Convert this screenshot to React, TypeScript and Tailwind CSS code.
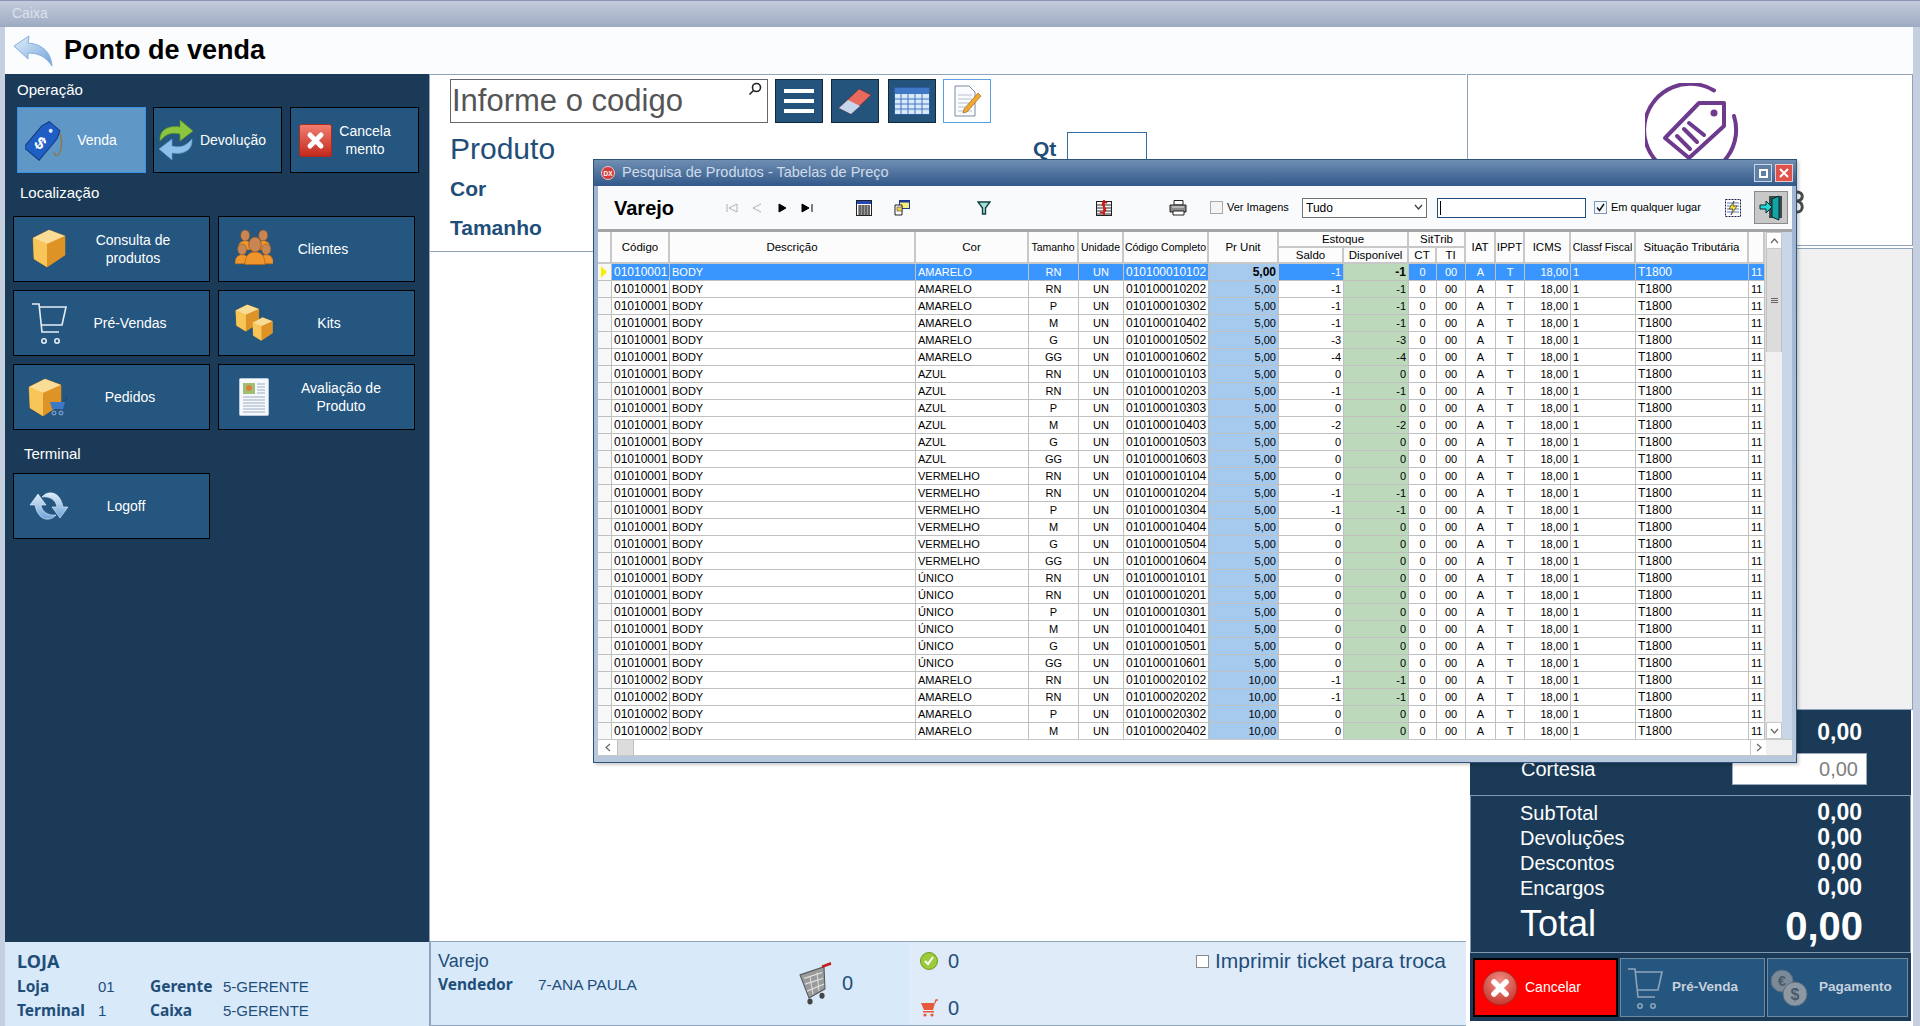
import React from "react";

const navy = "text-[#1f4e79]";
const noto = "[font-family:'Noto_Sans',sans-serif]";

function BackArrow() {
  return (
    <svg width="40" height="32" viewBox="0 0 40 32">
      <defs>
        <linearGradient id="ba" x1="0" y1="0" x2="1" y2="1">
          <stop offset="0" stopColor="#e4f0fb" />
          <stop offset="1" stopColor="#6fa3d8" />
        </linearGradient>
      </defs>
      <path d="M1 11 L16 1 L15 8 C29 9 38 17 39 31 C33 22 26 18 15 18 L15 24 Z" fill="url(#ba)" stroke="#86aedb" strokeWidth="1" />
    </svg>
  );
}
function TagIcon() {
  return (
    <svg width="40" height="44" viewBox="0 0 40 44">
      <path d="M26 9 C34 8 38 20 36 30 C35 38 30 40 29 34" fill="none" stroke="#8a7a55" strokeWidth="1.6" />
      <g transform="rotate(40 18 22)">
        <path d="M11 4 L25 4 L28 12 L28 40 L8 40 L8 12 Z" fill="#1f5fc4" stroke="#123a80" />
        <circle cx="18" cy="10" r="2" fill="#dfeaf8" />
        <text x="18" y="32" fontSize="17" fontWeight="700" fill="#ffffff" textAnchor="middle" fontFamily="Liberation Sans">$</text>
      </g>
    </svg>
  );
}
function SyncIcon() {
  return (
    <svg width="36" height="42" viewBox="0 0 36 42">
      <path d="M2 22 C1 11 10 6 22 8 L22 1 L35 12 L22 22 L22 15 C13 13 8 15 2 22 Z" fill="#8cc63f" stroke="#5c9423" strokeWidth="0.7" />
      <path d="M34 20 C35 31 26 36 14 34 L14 41 L1 30 L14 20 L14 27 C23 29 28 27 34 20 Z" fill="#8fc0ea" stroke="#5f97cc" strokeWidth="0.7" />
    </svg>
  );
}
function RedX() {
  return (
    <svg width="33" height="33" viewBox="0 0 33 33">
      <defs>
        <linearGradient id="rx" x1="0" y1="0" x2="0" y2="1">
          <stop offset="0" stopColor="#f08070" />
          <stop offset="1" stopColor="#c4281c" />
        </linearGradient>
      </defs>
      <rect x="0.5" y="0.5" width="32" height="32" rx="2" fill="url(#rx)" stroke="#a82a20" />
      <path d="M11 11 L22 22 M22 11 L11 22" stroke="#fff" strokeWidth="5" strokeLinecap="round" />
    </svg>
  );
}
function BoxShape() {
  return (
    <>
      <path d="M1 9 L17 1 L33 7 L33 26 L15 38 L2 30 Z" fill="#f2b546" stroke="#c98a20" strokeWidth="0.6" />
      <path d="M1 9 L15 15 L33 7 L17 1 Z" fill="#f9dc96" />
      <path d="M15 15 L33 7 L33 26 L15 38 Z" fill="#dd9326" />
      <path d="M1 9 L15 15 L15 38 L2 30 Z" fill="#f7c558" />
    </>
  );
}
function BoxIcon() {
  return (
    <svg width="34" height="40" viewBox="0 0 34 40">
      <BoxShape />
    </svg>
  );
}
function BoxCartIcon() {
  return (
    <svg width="42" height="38" viewBox="0 0 42 38">
      <BoxShape />
      <path d="M22 24 L37 24 L35 31 L24 31 Z" fill="#3f78c4" />
      <path d="M37 24 L39 18" stroke="#1a4a85" strokeWidth="1.5" />
      <circle cx="26" cy="35" r="2" fill="#2c5d9c" stroke="#cfe0f2" strokeWidth="0.6" />
      <circle cx="33" cy="35" r="2" fill="#2c5d9c" stroke="#cfe0f2" strokeWidth="0.6" />
    </svg>
  );
}
function BoxesIcon() {
  return (
    <svg width="38" height="38" viewBox="0 0 38 38">
      <g transform="scale(0.72)"><BoxShape /></g>
      <g transform="translate(17 13) scale(0.62)"><BoxShape /></g>
    </svg>
  );
}
function PeopleIcon() {
  const P = ({ x, y, s }: { x: number; y: number; s: number }) => (
    <g transform={`translate(${x} ${y}) scale(${s})`}>
      <ellipse cx="8" cy="6" rx="5" ry="6" fill="#c98552" stroke="#8a5528" strokeWidth="0.6" />
      <path d="M0 22 C0 14 4 12 8 12 C12 12 16 14 16 22 Z" fill="#f0942c" stroke="#b06a18" strokeWidth="0.6" />
    </g>
  );
  return (
    <svg width="38" height="40" viewBox="0 0 38 40">
      <P x={3} y={1} s={0.9} />
      <P x={21} y={1} s={0.9} />
      <P x={0} y={15} s={0.9} />
      <P x={24} y={15} s={0.9} />
      <P x={10} y={8} s={1.25} />
    </svg>
  );
}
function CartOutline({ color = "#e6eef5" }: { color?: string }) {
  return (
    <svg width="36" height="44" viewBox="0 0 36 44" fill="none" stroke={color} strokeWidth="1.6">
      <path d="M1 3 L8 3 L11 31 L28 31" />
      <path d="M8 6 L35 6 L31 24 L10 24" />
      <circle cx="13" cy="40" r="2.2" />
      <circle cx="26" cy="40" r="2.2" />
    </svg>
  );
}
function DocIcon() {
  return (
    <svg width="30" height="38" viewBox="0 0 30 38">
      <rect x="0.5" y="0.5" width="29" height="37" rx="1" fill="#f6f8fb" stroke="#b7c6d9" />
      <rect x="4" y="5" width="12" height="11" fill="#9fbf72" />
      <circle cx="10" cy="10" r="3" fill="#d9813a" />
      {[6, 9, 12, 15].map((y) => (
        <path key={y} d={`M18 ${y} H26`} stroke="#9caec4" />
      ))}
      {[19, 22, 25, 28, 31, 34].map((y) => (
        <path key={y} d={`M4 ${y} H26`} stroke="#9caec4" />
      ))}
    </svg>
  );
}
function RefreshIcon() {
  return (
    <svg width="40" height="32" viewBox="0 0 40 32">
      <defs>
        <linearGradient id="rf" x1="0" y1="0" x2="0" y2="1">
          <stop offset="0" stopColor="#dcecf9" />
          <stop offset="1" stopColor="#6ea4d8" />
        </linearGradient>
      </defs>
      <path d="M1 15 L9 4 L17 15 L12 15 C13 22 19 26 27 25 C21 32 9 31 6 15 Z" fill="url(#rf)" stroke="#eaf3fb" strokeWidth="0.6" />
      <path d="M39 17 L31 28 L23 17 L28 17 C27 10 21 6 13 7 C19 0 31 1 34 17 Z" fill="url(#rf)" stroke="#eaf3fb" strokeWidth="0.6" />
    </svg>
  );
}
function HamburgerIcon() {
  return (
    <svg width="30" height="24" viewBox="0 0 30 24" fill="#fff">
      <rect x="0" y="0" width="30" height="4" />
      <rect x="0" y="10" width="30" height="4" />
      <rect x="0" y="20" width="30" height="4" />
    </svg>
  );
}
function EraserIcon() {
  return (
    <svg width="36" height="30" viewBox="0 0 36 30">
      <path d="M2 22 L22 3 L34 9 L14 28 Z" fill="#e8695e" stroke="#7a2a24" strokeWidth="0.6" />
      <path d="M2 22 L11 14 L23 20 L14 28 Z" fill="#c5d6ee" />
    </svg>
  );
}
function TableIcon() {
  return (
    <svg width="36" height="28" viewBox="0 0 36 28">
      <rect x="0.5" y="0.5" width="35" height="27" fill="#dbe8f8" stroke="#2c5d9c" />
      <rect x="1" y="1" width="34" height="6" fill="#3f78c4" />
      {[12, 17, 22].map((y) => (
        <path key={y} d={`M1 ${y} H35`} stroke="#3f78c4" />
      ))}
      {[7, 14, 21, 28].map((x) => (
        <path key={x} d={`M${x} 7 V27`} stroke="#3f78c4" />
      ))}
    </svg>
  );
}
function NoteEditIcon() {
  return (
    <svg width="30" height="32" viewBox="0 0 30 32">
      <path d="M3 1 L17 1 L23 7 L23 31 L3 31 Z" fill="#fbfcff" stroke="#7c8aa0" />
      {[10, 14, 18, 22, 26].map((y) => (
        <path key={y} d={`M6 ${y} H20`} stroke="#b4c0d2" />
      ))}
      <path d="M12 24 L26 8 L29 11 L15 27 L11 28 Z" fill="#f2a830" stroke="#8a5a10" strokeWidth="0.6" />
    </svg>
  );
}
function PurpleBadge() {
  return (
    <svg width="96" height="96" viewBox="0 0 96 96" fill="none" stroke="#6d3a8e" strokeWidth="4">
      <path d="M69 7.5 A46 46 0 1 0 89 33" strokeLinecap="round" />
      <path d="M54 20 L79 20 L79 43 L44 75 L20 55 Z" strokeLinejoin="round" />
      <circle cx="69" cy="30" r="3.5" fill="#6d3a8e" stroke="none" />
      <path d="M44 40 L59 52 M39 46 L52 59 M32 53 L45 66" strokeLinecap="round" />
    </svg>
  );
}
function DxIcon() {
  return (
    <svg width="14" height="14" viewBox="0 0 14 14">
      <circle cx="7" cy="7" r="6.5" fill="#d33a3a" stroke="#f0c8c8" strokeWidth="1" />
      <text x="7" y="9.5" fontSize="6.5" fontWeight="700" fill="#fff" textAnchor="middle" fontFamily="Liberation Sans">DX</text>
    </svg>
  );
}
function NavIcon({ kind, off }: { kind: "first" | "prev" | "next" | "last"; off?: boolean }) {
  const c = off ? "none" : "#000";
  const s = off ? "#b0b0b0" : "#000";
  return (
    <svg width="12" height="12" viewBox="0 0 12 12" fill={c} stroke={s} strokeWidth="1">
      {kind === "first" && <path d="M1 2 V10 M11 2 L3 6 L11 10 Z" />}
      {kind === "prev" && <path d="M11 2 L3 6 L11 10" />}
      {kind === "next" && <path d="M3 2 L10 6 L3 10 Z" />}
      {kind === "last" && <path d="M1 2 L8 6 L1 10 Z M11 2 V10" />}
    </svg>
  );
}
function CalendarSmall() {
  return (
    <svg width="16" height="16" viewBox="0 0 16 16">
      <rect x="0.5" y="0.5" width="15" height="15" fill="#fff" stroke="#222" />
      <rect x="1" y="1" width="14" height="3" fill="#2448b8" />
      {[6, 8, 10, 12, 14].map((y) => (
        <path key={y} d={`M2 ${y} H14`} stroke="#333" />
      ))}
      {[4, 7, 10, 13].map((x) => (
        <path key={x} d={`M${x} 5 V15`} stroke="#333" />
      ))}
    </svg>
  );
}
function CopySmall() {
  return (
    <svg width="16" height="16" viewBox="0 0 16 16">
      <rect x="5.5" y="0.5" width="10" height="8" fill="#f4ee80" stroke="#1c3a90" />
      <rect x="5.5" y="0.5" width="10" height="2" fill="#1c3a90" />
      <path d="M1 5 H8 V15 H1 Z" fill="#fff" stroke="#222" />
      <rect x="3" y="7" width="5" height="4" fill="#f0d050" stroke="#222" strokeWidth="0.5" />
    </svg>
  );
}
function FilterSmall() {
  return (
    <svg width="14" height="14" viewBox="0 0 14 14">
      <path d="M1 1 H13 L8.5 7 V13 L5.5 13 V7 Z" fill="#a8e0d8" stroke="#123f40" strokeWidth="1.4" />
    </svg>
  );
}
function DollarSmall() {
  return (
    <svg width="16" height="17" viewBox="0 0 16 17">
      <rect x="0.5" y="2.5" width="15" height="14" fill="#f2f2f2" stroke="#222" />
      {[6, 9, 12, 15].map((y) => (
        <path key={y} d={`M1 ${y} H15`} stroke="#333" />
      ))}
      <path d="M11 4 C8 2 5 4 8 8 C11 11 8 15 4 13 M8 1 V16" stroke="#d01818" strokeWidth="1.8" fill="none" />
    </svg>
  );
}
function PrinterSmall() {
  return (
    <svg width="18" height="16" viewBox="0 0 18 16">
      <path d="M5 0.5 H14 V5 H5 Z" fill="#fff" stroke="#222" />
      <path d="M1 5 H17 V12 H1 Z" fill="#8c8c8c" stroke="#222" />
      <path d="M3 7 H15" stroke="#e0e0e0" />
      <path d="M4 11 H15 V15 H4 Z" fill="#fff" stroke="#222" />
    </svg>
  );
}
function LightningSmall() {
  return (
    <svg width="16" height="18" viewBox="0 0 16 18">
      <rect x="0.5" y="0.5" width="15" height="17" fill="#fff" stroke="#1c1c50" strokeDasharray="2 1" />
      {[4, 7, 10, 13].map((y) => (
        <path key={y} d={`M2 ${y} H14`} stroke="#5a78b8" />
      ))}
      <path d="M9 2 L4 10 L8 10 L6 16 L12 7 L8 7 Z" fill="#f4e030" stroke="#222" strokeWidth="0.6" />
    </svg>
  );
}
function ExitIcon() {
  return (
    <svg width="24" height="26" viewBox="0 0 24 26">
      <rect x="10" y="1" width="13" height="22" fill="#3a4a4a" />
      <path d="M13 4 L20 1 L20 25 L13 22 Z" fill="#12a5a5" stroke="#082828" />
      <path d="M1 10 H7 V6 L13 12 L7 18 V14 H1 Z" fill="#26d6d6" stroke="#082828" />
    </svg>
  );
}
function CheckCircle() {
  return (
    <svg width="18" height="18" viewBox="0 0 18 18">
      <circle cx="9" cy="9" r="8.5" fill="#9ccc3c" stroke="#6c9a24" />
      <path d="M5 9 L8 12 L13 5" fill="none" stroke="#fff" strokeWidth="2" />
    </svg>
  );
}
function RedCart() {
  return (
    <svg width="18" height="18" viewBox="0 0 18 18" fill="#e8583a">
      <path d="M1 4 H15 L13 11 H4 Z" />
      <path d="M15 4 L16 1 H18" fill="none" stroke="#e8583a" strokeWidth="1.4" />
      <rect x="3" y="12" width="11" height="1.5" />
      <circle cx="5" cy="16" r="1.6" />
      <circle cx="12" cy="16" r="1.6" />
    </svg>
  );
}
function GrayCart() {
  return (
    <svg width="34" height="44" viewBox="0 0 34 38" preserveAspectRatio="none">
      <path d="M2 12 L26 5 L27 24 L11 32 Z" fill="#9a9a9a" stroke="#555" />
      <path d="M6 15 L24 10 M7 20 L25 15 M9 26 L26 20 M12 13 L15 29 M19 10 L21 26" stroke="#ddd" />
      <path d="M24 5 L33 2" stroke="#c02020" strokeWidth="2.4" />
      <circle cx="12" cy="35" r="2.6" fill="#444" />
      <circle cx="24" cy="30" r="2.6" fill="#444" />
    </svg>
  );
}
function BigRedX() {
  return (
    <svg width="36" height="36" viewBox="0 0 36 36">
      <defs>
        <radialGradient id="bx" cx="0.5" cy="0.3" r="0.8">
          <stop offset="0" stopColor="#f09088" />
          <stop offset="1" stopColor="#c02a20" />
        </radialGradient>
      </defs>
      <circle cx="18" cy="18" r="17" fill="url(#bx)" stroke="#a82a20" />
      <path d="M12 12 L24 24 M24 12 L12 24" stroke="#fff" strokeWidth="5.5" strokeLinecap="round" />
    </svg>
  );
}
function CoinsIcon() {
  return (
    <svg width="38" height="38" viewBox="0 0 38 38">
      <circle cx="12" cy="12" r="11" fill="#7a8a98" stroke="#5a6a78" />
      <text x="12" y="17" fontSize="14" fontWeight="700" fill="#4c5a68" textAnchor="middle" fontFamily="Liberation Sans">€</text>
      <circle cx="25" cy="25" r="12" fill="#8c98a4" stroke="#5a6a78" />
      <text x="25" y="31" fontSize="16" fontWeight="700" fill="#4c5a68" textAnchor="middle" fontFamily="Liberation Sans">$</text>
    </svg>
  );
}

function Btn({ icon, iconCls, textCls, w, active, children }: { icon: React.ReactNode; iconCls: string; textCls: string; w: string; active?: boolean; children: React.ReactNode }) {
  return (
    <div className={`${w} h-[66px] flex items-center border text-[14px] leading-[18px] text-white ${active ? "bg-[#5f98c6] border-[#3b8fe0]" : "bg-[#245680] border-black"}`}>
      <div className={`${iconCls} flex justify-center shrink-0`}>{icon}</div>
      <div className={`${textCls} text-center shrink-0`}>{children}</div>
    </div>
  );
}

function Sidebar() {
  return (
    <div className="h-[868px] bg-[#1a3a57] pt-[6px] text-white">
      <div className="h-[20px] ml-[12px] text-[15px] leading-[20px]">Operação</div>
      <div className="mt-[7px] ml-[12px] flex">
        <Btn w="w-[129px]" active icon={<TagIcon />} iconCls="w-[54px]" textCls="w-[50px]">Venda</Btn>
        <div className="ml-[7px]">
          <Btn w="w-[129px]" icon={<SyncIcon />} iconCls="w-[44px]" textCls="w-[70px]">Devolução</Btn>
        </div>
        <div className="ml-[8px]">
          <Btn w="w-[129px]" icon={<RedX />} iconCls="w-[48px]" textCls="w-[52px]">Cancela<br />mento</Btn>
        </div>
      </div>
      <div className="h-[20px] mt-[10px] ml-[15px] text-[15px] leading-[20px]">Localização</div>
      <div className="mt-[13px] ml-[8px] grid grid-cols-[197px_197px] gap-x-[8px] gap-y-[8px]">
        <Btn w="w-[197px]" icon={<BoxIcon />} iconCls="w-[70px]" textCls="w-[98px]">Consulta de<br />produtos</Btn>
        <Btn w="w-[197px]" icon={<PeopleIcon />} iconCls="w-[70px]" textCls="w-[68px]">Clientes</Btn>
        <Btn w="w-[197px]" icon={<CartOutline />} iconCls="w-[70px]" textCls="w-[92px]">Pré-Vendas</Btn>
        <Btn w="w-[197px]" icon={<BoxesIcon />} iconCls="w-[70px]" textCls="w-[80px]">Kits</Btn>
        <Btn w="w-[197px]" icon={<BoxCartIcon />} iconCls="w-[70px]" textCls="w-[92px]">Pedidos</Btn>
        <Btn w="w-[197px]" icon={<DocIcon />} iconCls="w-[70px]" textCls="w-[104px]">Avaliação de<br />Produto</Btn>
      </div>
      <div className="h-[20px] mt-[14px] ml-[19px] text-[15px] leading-[20px]">Terminal</div>
      <div className="mt-[9px] ml-[8px]">
        <Btn w="w-[197px]" icon={<RefreshIcon />} iconCls="w-[70px]" textCls="w-[84px]">Logoff</Btn>
      </div>
    </div>
  );
}

function BottomLeft() {
  const row = "flex h-[24px] items-center text-[15px]";
  const label = `font-bold text-[15.5px] ${noto}`;
  return (
    <div className={`h-[84px] bg-[#d8e9f9] pl-[12px] pt-[8px] ${navy}`}>
      <div className={`text-[18px] font-bold leading-[22px] ${noto}`}>LOJA</div>
      <div className={`${row} mt-[3px]`}>
        <span className={`w-[81px] ${label}`}>Loja</span>
        <span className="w-[52px]">01</span>
        <span className={`w-[73px] ${label}`}>Gerente</span>
        <span>5-GERENTE</span>
      </div>
      <div className={row}>
        <span className={`w-[81px] ${label}`}>Terminal</span>
        <span className="w-[52px]">1</span>
        <span className={`w-[73px] ${label}`}>Caixa</span>
        <span>5-GERENTE</span>
      </div>
    </div>
  );
}

function ToolBtn({ dark, children }: { dark?: boolean; children: React.ReactNode }) {
  return (
    <div className={`w-[48px] h-[44px] flex items-center justify-center border ${dark ? "bg-[#24537c] border-[#11283d]" : "bg-white border-[#5aa0e0]"}`}>
      {children}
    </div>
  );
}

function Center() {
  return (
    <div className="w-[1036px] flex flex-col bg-white">
      <div className="h-[178px] border-t border-b border-[#8fa3bb] pl-[20px] pt-[4px]">
        <div className="flex">
          <div className="relative w-[318px] h-[44px] border border-[#666] text-[31px] leading-[42px] pl-[1px] text-[#555]">
            Informe o codigo
            <svg className="absolute right-[5px] top-[2px]" width="14" height="14" viewBox="0 0 14 14" fill="none" stroke="#222" strokeWidth="1.6">
              <circle cx="8.5" cy="5.5" r="4" />
              <path d="M5.5 8.5 L1.5 12.5" />
            </svg>
          </div>
          <div className="ml-[7px]"><ToolBtn dark><HamburgerIcon /></ToolBtn></div>
          <div className="ml-[8px]"><ToolBtn dark><EraserIcon /></ToolBtn></div>
          <div className="ml-[9px]"><ToolBtn dark><TableIcon /></ToolBtn></div>
          <div className="ml-[7px]"><ToolBtn><NoteEditIcon /></ToolBtn></div>
        </div>
        <div className="mt-[6px] flex items-start h-[40px]">
          <div className={`w-[583px] text-[30px] leading-[40px] ${navy}`}>Produto</div>
          <div className={`w-[34px] text-[21px] font-bold leading-[40px] ${navy}`}>Qt</div>
          <div className="w-[80px] h-[40px] mt-[3px] border border-[#2f6ea8]" />
        </div>
        <div className={`mt-[8px] h-[24px] text-[21px] font-bold leading-[24px] ${navy}`}>Cor</div>
        <div className={`mt-[15px] h-[24px] text-[21px] font-bold leading-[24px] ${navy}`}>Tamanho</div>
      </div>
      <div className="flex-1" />
      <div className="h-[85px] flex">
        <div className={`w-[479px] border-l border-t border-b border-[#8fa3bb] bg-[#d8e9f9] pl-[7px] pt-[7px] flex ${navy}`}>
          <div className="w-[364px]">
            <div className="text-[18px] leading-[24px]">Varejo</div>
            <div className="flex h-[24px] items-center text-[15.5px]">
              <span className={`w-[100px] font-bold ${noto} text-[15.5px]`}>Vendedor</span>
              <span>7-ANA PAULA</span>
            </div>
          </div>
          <div className="pt-[8px] flex items-center h-[60px] -ml-[4px]">
            <GrayCart />
            <span className="ml-[10px] text-[20px]">0</span>
          </div>
        </div>
        <div className={`flex-1 bg-[#dfebf8] border-t border-b border-[#8fa3bb] flex pl-[11px] pt-[7px] ${navy}`}>
          <div className="w-[276px]">
            <div className="h-[24px] flex items-center"><CheckCircle /><span className="ml-[10px] text-[20px]">0</span></div>
            <div className="h-[24px] mt-[23px] flex items-center"><RedCart /><span className="ml-[10px] text-[20px]">0</span></div>
          </div>
          <div className="h-[24px] flex items-center">
            <div className="w-[13px] h-[13px] bg-white border border-[#8a8a8a]" />
            <span className="ml-[6px] text-[21px] whitespace-nowrap">Imprimir ticket para troca</span>
          </div>
        </div>
      </div>
    </div>
  );
}

function Amount({ big }: { big?: boolean }) {
  return <span className={`font-bold text-white ${big ? "text-[40px] leading-[44px]" : "text-[23px]"}`}>0,00</span>;
}

function Right() {
  const row = "h-[25px] flex items-center justify-between pl-[49px] pr-[48px] text-[20px] text-white";
  return (
    <div className="w-[447px] flex flex-col bg-white">
      <div className="relative h-[172px] border border-[#8fa3bb] ml-[1px] pt-[8px] pl-[177px]">
        <PurpleBadge />
        <svg className="absolute right-[106px] top-[115px]" width="10" height="24" viewBox="0 0 10 24" fill="none" stroke="#4a4a4a" strokeWidth="3">
          <path d="M1 2 C8 2 8 10 1 11 C8 12 8 22 1 22" />
        </svg>
      </div>
      <div className="mt-[2px] ml-[3px] h-[462px] bg-[#f0f0f0] border border-[#8fa3bb]" />
      <div className="ml-[4px] mr-[2px] h-[311px] bg-[#1a3a57] flex flex-col">
        <div className="h-[85px] relative">
          <div className="h-[44px] flex items-center justify-end pr-[49px]"><Amount /></div>
          <div className="flex items-center h-[32px] -mt-[1px] pl-[51px] pr-[44px] justify-between">
            <span className="text-[20px] text-white">Cortesia</span>
            <div className="w-[135px] h-[32px] bg-white border border-[#9aa8b8] text-right pr-[8px] text-[20px] leading-[30px] text-[#808080]">0,00</div>
          </div>
        </div>
        <div className="h-[158px] border border-[#7f99b3] pt-[4px]">
          <div className={row}><span>SubTotal</span><Amount /></div>
          <div className={row}><span>Devoluções</span><Amount /></div>
          <div className={row}><span>Descontos</span><Amount /></div>
          <div className={row}><span>Encargos</span><Amount /></div>
          <div className="h-[50px] flex items-center justify-between pl-[49px] pr-[47px] text-white">
            <span className="text-[36px] leading-[36px] -mt-[3px]">Total</span>
            <span className="mt-[2px]"><Amount big /></span>
          </div>
        </div>
        <div className="flex pt-[5px] pl-[3px] gap-[2px]">
          <div className="w-[145px] h-[59px] bg-[#ff0000] border-2 border-black flex items-center pl-[7px] text-white text-[14px]">
            <BigRedX /><span className="ml-[7px]">Cancelar</span>
          </div>
          <div className="w-[145px] h-[59px] bg-[#245680] border border-[#6f8aa5] flex items-center pl-[6px] text-[#c6d1dd] text-[14px]">
            <CartOutline color="#8ea4b8" /><span className="ml-[9px] font-bold text-[13.5px]">Pré-Venda</span>
          </div>
          <div className="w-[141px] h-[59px] bg-[#245680] border border-[#6f8aa5] flex items-center pl-[2px] text-[#c6d1dd] text-[14px]">
            <CoinsIcon /><span className="ml-[11px] font-bold text-[13.5px]">Pagamento</span>
          </div>
        </div>
      </div>
    </div>
  );
}

const COLS = [
  { w: "w-[14px]", a: "" },
  { w: "w-[58px]", a: "text-left text-[12px]" },
  { w: "w-[246px]", a: "text-left" },
  { w: "w-[113px]", a: "text-left" },
  { w: "w-[50px]", a: "text-center" },
  { w: "w-[45px]", a: "text-center" },
  { w: "w-[85px]", a: "text-center text-[12px]" },
  { w: "w-[70px]", a: "text-right" },
  { w: "w-[65px]", a: "text-right" },
  { w: "w-[65px]", a: "text-right" },
  { w: "w-[28px]", a: "text-center" },
  { w: "w-[29px]", a: "text-center" },
  { w: "w-[30px]", a: "text-center" },
  { w: "w-[29px]", a: "text-center" },
  { w: "w-[46px]", a: "text-right" },
  { w: "w-[65px]", a: "text-left" },
  { w: "w-[113px]", a: "text-left text-[12px]" },
  { w: "w-[16px]", a: "text-left" },
];

type R = [string, string, string, string, string, string];
const RAW: R[] = [
  ["01010001", "AMARELO", "RN", "010100010102", "5,00", "-1"],
  ["01010001", "AMARELO", "RN", "010100010202", "5,00", "-1"],
  ["01010001", "AMARELO", "P", "010100010302", "5,00", "-1"],
  ["01010001", "AMARELO", "M", "010100010402", "5,00", "-1"],
  ["01010001", "AMARELO", "G", "010100010502", "5,00", "-3"],
  ["01010001", "AMARELO", "GG", "010100010602", "5,00", "-4"],
  ["01010001", "AZUL", "RN", "010100010103", "5,00", "0"],
  ["01010001", "AZUL", "RN", "010100010203", "5,00", "-1"],
  ["01010001", "AZUL", "P", "010100010303", "5,00", "0"],
  ["01010001", "AZUL", "M", "010100010403", "5,00", "-2"],
  ["01010001", "AZUL", "G", "010100010503", "5,00", "0"],
  ["01010001", "AZUL", "GG", "010100010603", "5,00", "0"],
  ["01010001", "VERMELHO", "RN", "010100010104", "5,00", "0"],
  ["01010001", "VERMELHO", "RN", "010100010204", "5,00", "-1"],
  ["01010001", "VERMELHO", "P", "010100010304", "5,00", "-1"],
  ["01010001", "VERMELHO", "M", "010100010404", "5,00", "0"],
  ["01010001", "VERMELHO", "G", "010100010504", "5,00", "0"],
  ["01010001", "VERMELHO", "GG", "010100010604", "5,00", "0"],
  ["01010001", "ÚNICO", "RN", "010100010101", "5,00", "0"],
  ["01010001", "ÚNICO", "RN", "010100010201", "5,00", "0"],
  ["01010001", "ÚNICO", "P", "010100010301", "5,00", "0"],
  ["01010001", "ÚNICO", "M", "010100010401", "5,00", "0"],
  ["01010001", "ÚNICO", "G", "010100010501", "5,00", "0"],
  ["01010001", "ÚNICO", "GG", "010100010601", "5,00", "0"],
  ["01010002", "AMARELO", "RN", "010100020102", "10,00", "-1"],
  ["01010002", "AMARELO", "RN", "010100020202", "10,00", "-1"],
  ["01010002", "AMARELO", "P", "010100020302", "10,00", "0"],
  ["01010002", "AMARELO", "M", "010100020402", "10,00", "0"],
];

const TH = "border-r-2 border-b-2 border-[#c8c8c8] bg-[#fcfcfc] font-normal text-center text-[11.5px] p-0 overflow-hidden whitespace-nowrap";
const THN = "border-r-2 border-b-2 border-[#c8c8c8] bg-[#fcfcfc] font-normal text-center text-[10.5px] p-0 overflow-hidden whitespace-nowrap";

function Grid() {
  return (
    <table className="table-fixed border-separate border-spacing-0 w-[1167px] h-[506px] text-[11px] leading-[14px] text-black">
      <colgroup>
        {COLS.map((c, i) => (
          <col key={i} className={c.w} />
        ))}
      </colgroup>
      <thead>
        <tr className="h-[15px]">
          <th rowSpan={2} className={TH} />
          <th rowSpan={2} className={TH}>Código</th>
          <th rowSpan={2} className={TH}>Descrição</th>
          <th rowSpan={2} className={TH}>Cor</th>
          <th rowSpan={2} className={THN}>Tamanho</th>
          <th rowSpan={2} className={THN}>Unidade</th>
          <th rowSpan={2} className={THN}>Código Completo</th>
          <th rowSpan={2} className={TH}>Pr Unit</th>
          <th colSpan={2} className={TH}>Estoque</th>
          <th colSpan={2} className={TH}>SitTrib</th>
          <th rowSpan={2} className={TH}>IAT</th>
          <th rowSpan={2} className={TH}>IPPT</th>
          <th rowSpan={2} className={TH}>ICMS</th>
          <th rowSpan={2} className={THN}>Classf Fiscal</th>
          <th rowSpan={2} className={TH}>Situação Tributária</th>
          <th rowSpan={2} className={TH} />
        </tr>
        <tr className="h-[15px]">
          <th className={TH}>Saldo</th>
          <th className={TH}>Disponível</th>
          <th className={TH}>CT</th>
          <th className={TH}>TI</th>
        </tr>
      </thead>
      <tbody>
        {RAW.map((r, idx) => {
          const sel = idx === 0;
          const vals = ["", r[0], "BODY", r[1], r[2], "UN", r[3], r[4], r[5], r[5], "0", "00", "A", "T", "18,00", "1", "T1800", "11"];
          return (
            <tr key={idx} className="h-[17px]">
              {vals.map((v, i) => {
                let bg = sel ? "bg-[#3a96ff] text-white" : "bg-white";
                if (i === 0) bg = "bg-[#f8f8f8]";
                if (i === 7) bg = "bg-[#a6c9ee] text-black";
                if (i === 9) bg = "bg-[#bcd9bc] text-black";
                const bold = sel && (i === 7 || i === 9) ? "font-bold text-[12px]" : "";
                return (
                  <td key={i} className={`border-r border-b border-[#c0c0c0] px-[2px] py-0 overflow-hidden whitespace-nowrap ${COLS[i].a} ${bg} ${bold}`}>
                    {i === 0 && sel ? (
                      <svg width="8" height="12" viewBox="0 0 8 12"><path d="M1 0 L7 6 L1 12 Z" fill="#f5f000" /></svg>
                    ) : (
                      v
                    )}
                  </td>
                );
              })}
            </tr>
          );
        })}
      </tbody>
    </table>
  );
}

function Modal() {
  return (
    <div className="absolute left-[593px] top-[159px] w-[1204px] h-[604px] border border-[#2f527a] bg-gradient-to-b from-[#9db3d1] to-[#b8c8dc] flex flex-col shadow-[2px_2px_3px_rgba(0,0,0,0.2)]">
      <div className="h-[26px] shrink-0 flex items-center bg-gradient-to-b from-[#6f8eb2] to-[#32598a] pl-[7px] pr-[3px]">
        <DxIcon />
        <span className="ml-[7px] text-[14.5px] text-[#cfdbe9]">Pesquisa de Produtos - Tabelas de Preço</span>
        <div className="ml-auto flex gap-[3px]">
          <div className="w-[18px] h-[18px] bg-[#5f7fa6] border border-[#c8d6e6] flex items-center justify-center">
            <div className="w-[9px] h-[9px] border-2 border-white" />
          </div>
          <div className="w-[18px] h-[18px] bg-[#e0524a] border border-[#e8c8c8] flex items-center justify-center">
            <svg width="10" height="10" viewBox="0 0 10 10"><path d="M1 1 L9 9 M9 1 L1 9" stroke="#fff" strokeWidth="2" /></svg>
          </div>
        </div>
      </div>
      <div className="mx-[4px] h-[46px] shrink-0 bg-[#f8fafc] flex items-center text-[11px] border-b-[3px] border-[#a4a4a4]">
        <span className="ml-[16px] w-[62px] text-[20px] font-bold text-black">Varejo</span>
        <div className="ml-[50px]"><NavIcon kind="first" off /></div>
        <div className="ml-[12px]"><NavIcon kind="prev" off /></div>
        <div className="ml-[14px]"><NavIcon kind="next" /></div>
        <div className="ml-[13px]"><NavIcon kind="last" /></div>
        <div className="ml-[43px]"><CalendarSmall /></div>
        <div className="ml-[22px]"><CopySmall /></div>
        <div className="ml-[67px]"><FilterSmall /></div>
        <div className="ml-[105px]"><DollarSmall /></div>
        <div className="ml-[57px]"><PrinterSmall /></div>
        <div className="ml-[23px] w-[13px] h-[13px] bg-[#f4f4f4] border border-[#a8a8a8]" />
        <span className="ml-[4px] w-[59px] whitespace-nowrap">Ver Imagens</span>
        <div className="ml-[16px] w-[125px] h-[20px] bg-white border border-[#707070] flex items-center justify-between px-[3px] text-[12px]">
          <span>Tudo</span>
          <svg width="9" height="7" viewBox="0 0 9 7"><path d="M1 1 L4.5 5 L8 1" fill="none" stroke="#444" strokeWidth="1.4" /></svg>
        </div>
        <div className="ml-[10px] w-[149px] h-[20px] bg-white border border-[#1f4e79] flex items-center pl-[2px]">
          <div className="w-[1px] h-[14px] bg-black" />
        </div>
        <div className="ml-[8px] w-[13px] h-[13px] bg-[#f4f8fc] border border-[#7a98b8] flex items-center justify-center">
          <svg width="9" height="9" viewBox="0 0 9 9"><path d="M1 4.5 L3.5 7.5 L8 1" fill="none" stroke="#111" strokeWidth="1.4" /></svg>
        </div>
        <span className="ml-[4px] w-[86px] whitespace-nowrap">Em qualquer lugar</span>
        <div className="ml-[28px]"><LightningSmall /></div>
        <div className="ml-[13px] w-[34px] h-[33px] bg-[#c8c8c8] border border-[#8a8a8a] flex items-center justify-center">
          <ExitIcon />
        </div>
      </div>
      <div className="mx-[4px] flex-1 flex flex-col bg-white">
        <div className="flex h-[507px]">
          <Grid />
          <div className="w-[17px] flex flex-col bg-[#f0f0f0] border-l border-[#dcdcdc]">
            <div className="h-[17px] bg-white border border-[#c8c8c8] flex items-center justify-center">
              <svg width="9" height="6" viewBox="0 0 9 6"><path d="M1 5 L4.5 1 L8 5" fill="none" stroke="#666" strokeWidth="1.2" /></svg>
            </div>
            <div className="h-[103px] bg-[#dcdcdc] border-x border-[#c0c0c0] flex flex-col items-center justify-center gap-[1px]">
              <div className="w-[7px] h-[1px] bg-[#666]" />
              <div className="w-[7px] h-[1px] bg-[#666]" />
              <div className="w-[7px] h-[1px] bg-[#666]" />
            </div>
            <div className="flex-1" />
            <div className="h-[17px] bg-white border border-[#c8c8c8] flex items-center justify-center">
              <svg width="9" height="6" viewBox="0 0 9 6"><path d="M1 1 L4.5 5 L8 1" fill="none" stroke="#666" strokeWidth="1.2" /></svg>
            </div>
          </div>
          <div className="flex-1 bg-[#c8d6e8]" />
        </div>
        <div className="h-[17px] flex border-t border-b border-[#c8c8c8]">
          <div className="w-[19px] bg-white flex items-center justify-center">
            <svg width="6" height="9" viewBox="0 0 6 9"><path d="M5 1 L1 4.5 L5 8" fill="none" stroke="#666" strokeWidth="1.2" /></svg>
          </div>
          <div className="w-[17px] bg-[#dcdcdc] border-x border-[#c0c0c0]" />
          <div className="w-[1116px] bg-white" />
          <div className="w-[16px] bg-white border-l border-[#c8c8c8] flex items-center justify-center">
            <svg width="6" height="9" viewBox="0 0 6 9"><path d="M1 1 L5 4.5 L1 8" fill="none" stroke="#666" strokeWidth="1.2" /></svg>
          </div>
          <div className="flex-1 bg-[#f0f0f0]" />
        </div>
      </div>
      <div className="h-[6px] shrink-0" />
    </div>
  );
}

export default function App() {
  return (
    <div className="relative w-[1920px] h-[1026px] overflow-hidden [font-family:'Liberation_Sans',sans-serif] bg-[#c5cfe0]">
      <div className="h-[27px] border-t border-[#8798b0] bg-gradient-to-b from-[#c3ccdc] to-[#9dabc2] pl-[12px] text-[14px] leading-[25px] text-[#dbe2ec]">Caixa</div>
      <div className="mx-[5px] mr-[7px] h-[47px] bg-[#fbfcfe] flex items-center pl-[8px]">
        <BackArrow />
        <span className="ml-[11px] text-[27px] font-bold text-black">Ponto de venda</span>
      </div>
      <div className="ml-[5px] mr-[7px] flex h-[952px]">
        <div className="w-[425px] shrink-0 border-r border-[#8fa3bb]">
          <Sidebar />
          <BottomLeft />
        </div>
        <Center />
        <Right />
      </div>
      <Modal />
    </div>
  );
}
